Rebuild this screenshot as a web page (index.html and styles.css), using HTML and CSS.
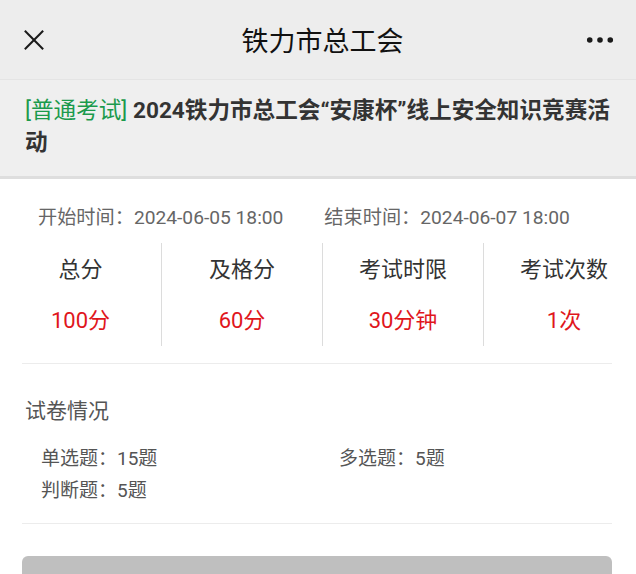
FILE: index.html
```html
<!DOCTYPE html>
<html lang="zh-CN">
<head>
  <meta charset="UTF-8">
  <meta name="viewport" content="width=device-width, initial-scale=1.0">
  <title>铁力市总工会</title>
  <link rel="stylesheet" href="styles.css">
</head>
<body>
  <header class="nav-bar">
    <svg class="nav-close" viewBox="0 0 24 24" fill="none" stroke="currentColor" stroke-width="2">
      <path d="M2 2L22 22" />
      <path d="M22 2L2 22" />
    </svg>
    <h1 class="nav-title">铁力市总工会</h1>
    <svg class="nav-more" viewBox="0 0 30 8" fill="currentColor">
      <circle cx="4" cy="4" r="3" />
      <circle cx="15" cy="4" r="3" />
      <circle cx="26" cy="4" r="3" />
    </svg>
  </header>

  <section class="exam-head">
    <h2 class="exam-title"><span class="exam-tag">[普通考试]</span> 2024铁力市总工会“安康杯”线上安全知识竞赛活动</h2>
  </section>

  <main class="exam-body">
    <div class="exam-time">
      <span>开始时间：2024-06-05 18:00</span>
      <span>结束时间：2024-06-07 18:00</span>
    </div>

    <div class="stats">
      <div class="stat">
        <div class="stat-label">总分</div>
        <div class="stat-value">100分</div>
      </div>
      <div class="stat">
        <div class="stat-label">及格分</div>
        <div class="stat-value">60分</div>
      </div>
      <div class="stat">
        <div class="stat-label">考试时限</div>
        <div class="stat-value">30分钟</div>
      </div>
      <div class="stat">
        <div class="stat-label">考试次数</div>
        <div class="stat-value">1次</div>
      </div>
    </div>

    <div class="paper">
      <h3 class="paper-title">试卷情况</h3>
      <div class="paper-list">
        <span>单选题：15题</span>
        <span>多选题：5题</span>
        <span>判断题：5题</span>
      </div>
    </div>

    <button class="start-btn" disabled>活动未开始，敬请期待</button>
  </main>
</body>
</html>
```

FILE: styles.css
```css
* {
	box-sizing: border-box;
}

body {
	margin: 0;
	background: #fff;
	font-family: Roboto, "Noto Sans CJK SC", sans-serif;
	color: #333;
	overflow: hidden;
}

.nav-bar {
	height: 80px;
	display: grid;
	grid-template-columns: 1fr auto 1fr;
	align-items: center;
	padding: 0 22px 0 23px;
	background: #ededed;
	border-bottom: 1px solid #e4e4e4;
	color: #1a1a1a;
}

.nav-close {
	width: 22px;
	height: 22px;
	stroke-width: 2.2;
}

.nav-title {
	margin: 0 0 0 8px;
	font-size: 27px;
	font-weight: 400;
	color: #111;
}

.nav-more {
	justify-self: end;
	width: 28px;
	height: 8px;
}

.exam-head {
	background: #efefef;
	padding: 15px 8px 17px 25px;
	border-bottom: 3px solid #dedede;
}

.exam-title {
	margin: 0;
	font-size: 22.6px;
	line-height: 32px;
	font-weight: 700;
	color: #333;
}

.exam-tag {
	font-weight: 400;
	color: #1b9a4c;
}

.exam-body {
	padding: 25px 24px 0 22px;
}

.exam-time {
	display: flex;
	gap: 41px;
	padding-left: 16px;
	font-size: 19.2px;
	line-height: 28px;
	color: #666;
}

.stats {
	display: flex;
	width: 644px;
	margin: 11px 0 0 -22px;
	padding-bottom: 17px;
}

.stat {
	flex: 0 0 161px;
	padding: 11px 0 9px;
	text-align: center;
}

.stat + .stat {
	border-left: 1px solid #dcdcdc;
}

.stat-label {
	font-size: 22px;
	line-height: 32px;
	color: #333;
}

.stat-value {
	margin-top: 19px;
	font-size: 22px;
	line-height: 32px;
	color: #e0161c;
}

.paper {
	border-top: 1px solid #ececec;
	border-bottom: 1px solid #ececec;
	padding: 32px 0 16px 3px;
}

.paper-title {
	margin: 0;
	font-size: 21px;
	line-height: 30px;
	font-weight: 400;
	color: #555;
}

.paper-list {
	display: grid;
	grid-template-columns: 298px 1fr;
	margin-top: 17px;
	padding-left: 16px;
	font-size: 19px;
	line-height: 32px;
	color: #555;
}

.start-btn {
	display: block;
	width: 100%;
	height: 56px;
	margin-top: 32px;
	border: none;
	border-radius: 6px;
	background: #bfbfbf;
	color: #fff;
	font-family: inherit;
	font-size: 21px;
}
```
